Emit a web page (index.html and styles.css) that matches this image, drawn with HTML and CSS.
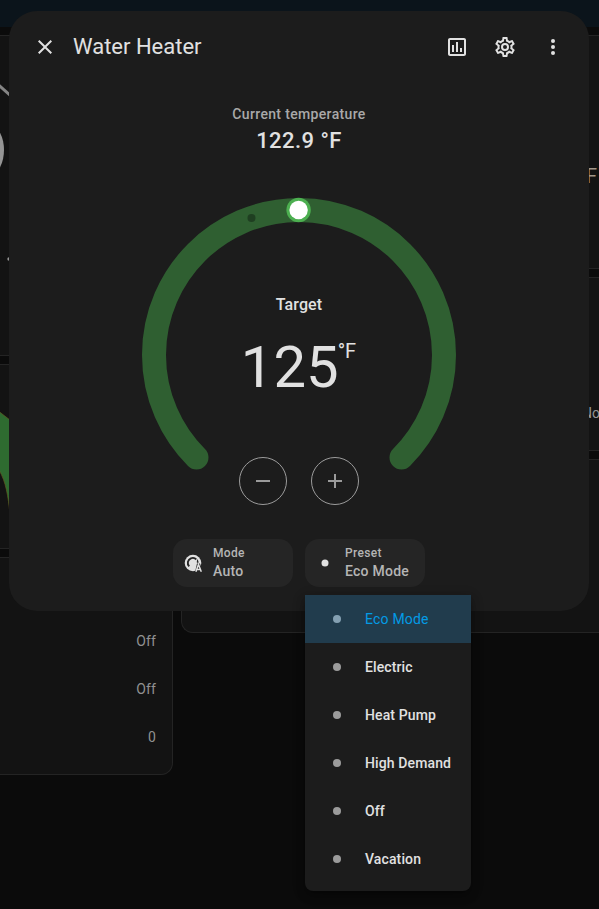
FILE: index.html
```html
<!DOCTYPE html>
<html lang="en">
<head>
<meta charset="utf-8">
<title>Water Heater</title>
<link rel="stylesheet" href="styles.css">
</head>
<body>
<div class="dashboard">
  <header class="app-bar"></header>
  <div class="columns">
    <div class="column column-left">
      <section class="card card-clock">
        <svg class="art" width="12" height="319" viewBox="0 36 12 319">
          <path d="M-2 84.500L12 97" stroke="#858585" stroke-width="3" fill="none"/>
          <ellipse cx="-8" cy="150" rx="12" ry="23" fill="#959595"/>
          <circle cx="9" cy="259" r="1.700" fill="#959595"/>
        </svg>
      </section>
      <section class="card card-gauge">
        <svg class="art" width="12" height="184" viewBox="0 365 12 184">
          <path d="M-1 411.500L10 420V514C8 496 6 482 -1 470Z" fill="#2e6b30" stroke="#6b5a20" stroke-width=".6"/>
        </svg>
      </section>
      <section class="card card-states">
        <div class="state">Off</div>
        <div class="state">Off</div>
        <div class="state">0</div>
      </section>
    </div>
    <div class="column column-right">
      <section class="card card-temp"><span class="unit-text">F</span></section>
      <section class="card card-note"><span class="note-text">No</span></section>
      <section class="card card-last"></section>
    </div>
  </div>
</div>

<main class="dialog">
  <header class="dialog-header">
    <svg class="icon" viewBox="0 0 24 24"><path d="M19,6.410L17.590,5L12,10.590L6.410,5L5,6.410L10.590,12L5,17.590L6.410,19L12,13.410L17.590,19L19,17.590L13.410,12L19,6.410Z"/></svg>
    <h1 class="title">Water Heater</h1>
    <div class="actions">
      <svg class="icon" viewBox="0 0 24 24"><path d="M9 17H7V10H9V17M13 17H11V7H13V17M17 17H15V13H17V17M19 19H5V5H19V19.100M19 3H5C3.900 3 3 3.900 3 5V19C3 20.100 3.900 21 5 21H19C20.100 21 21 20.100 21 19V5C21 3.900 20.100 3 19 3Z"/></svg>
      <svg class="icon" viewBox="0 0 24 24"><path d="M12,8A4,4 0 0,1 16,12A4,4 0 0,1 12,16A4,4 0 0,1 8,12A4,4 0 0,1 12,8M12,10A2,2 0 0,0 10,12A2,2 0 0,0 12,14A2,2 0 0,0 14,12A2,2 0 0,0 12,10M10,22C9.750,22 9.540,21.820 9.500,21.580L9.130,18.930C8.500,18.680 7.960,18.340 7.440,17.940L4.950,18.950C4.730,19.030 4.460,18.950 4.340,18.730L2.340,15.270C2.210,15.050 2.270,14.780 2.460,14.630L4.570,12.970L4.500,12L4.570,11L2.460,9.370C2.270,9.220 2.210,8.950 2.340,8.730L4.340,5.270C4.460,5.050 4.730,4.960 4.950,5.050L7.440,6.050C7.960,5.660 8.500,5.320 9.130,5.070L9.500,2.420C9.540,2.180 9.750,2 10,2H14C14.250,2 14.460,2.180 14.500,2.420L14.870,5.070C15.500,5.320 16.040,5.660 16.560,6.050L19.050,5.050C19.270,4.960 19.540,5.050 19.660,5.270L21.660,8.730C21.790,8.950 21.730,9.220 21.540,9.370L19.430,11L19.500,12L19.430,13L21.540,14.630C21.730,14.780 21.790,15.050 21.660,15.270L19.660,18.730C19.540,18.950 19.270,19.040 19.050,18.950L16.560,17.950C16.040,18.340 15.500,18.680 14.870,18.930L14.500,21.580C14.460,21.820 14.250,22 14,22H10M11.250,4L10.880,6.610C9.680,6.860 8.620,7.500 7.850,8.390L5.440,7.350L4.690,8.650L6.800,10.200C6.400,11.370 6.400,12.640 6.800,13.800L4.680,15.360L5.430,16.660L7.860,15.620C8.630,16.500 9.680,17.140 10.870,17.380L11.240,20H12.760L13.130,17.390C14.320,17.140 15.370,16.500 16.140,15.620L18.570,16.660L19.320,15.360L17.200,13.810C17.600,12.640 17.600,11.370 17.200,10.200L19.310,8.650L18.560,7.350L16.150,8.390C15.380,7.500 14.320,6.860 13.120,6.620L12.750,4H11.250Z"/></svg>
      <svg class="icon" viewBox="0 0 24 24"><circle cx="12" cy="6" r="2"/><circle cx="12" cy="12" r="2"/><circle cx="12" cy="18" r="2"/></svg>
    </div>
  </header>

  <div class="current">
    <div class="current-label">Current temperature</div>
    <div class="current-value">122.9 °F</div>
  </div>

  <div class="dial">
    <svg class="ring" viewBox="0 0 320 320">
      <path d="M57.500 262.500A145 145 0 1 1 262.500 262.500" fill="none" stroke="#2f5f31" stroke-width="24" stroke-linecap="round"/>
      <circle cx="112.500" cy="23" r="4" fill="#1f3f21"/>
      <circle cx="159.600" cy="15" r="12.200" fill="#4caf50"/>
      <circle cx="159.600" cy="15" r="9.200" fill="#fff"/>
    </svg>
    <div class="dial-content">
      <div class="target-label">Target</div>
      <div class="target"><span class="target-value">125</span><span class="target-unit">°F</span></div>
      <div class="steps">
        <button class="step" aria-label="Decrease"><svg class="icon" viewBox="0 0 24 24"><path d="M19,13H5V11H19V13Z"/></svg></button>
        <button class="step" aria-label="Increase"><svg class="icon" viewBox="0 0 24 24"><path d="M19,13H13V19H11V13H5V11H11V5H13V11H19V13Z"/></svg></button>
      </div>
    </div>
  </div>

  <div class="selects">
    <div class="select">
      <svg class="select-icon" viewBox="0 0 20 20">
        <circle cx="10" cy="10" r="8.300" fill="#e1e1e1"/>
        <path d="M6.200 13.400A5 5 0 1 1 14.800 9.800" fill="none" stroke="#252525" stroke-width="1.900"/>
        <path d="M8.200 11.200L14.600 5.200L12.500 13Z" fill="#e1e1e1"/>
        <path d="M11.800 20L14 10.500H17L20 20Z" fill="#252525"/>
        <path d="M12.900 18.700L15.500 11.500L18.300 18.700M13.800 16.500H17.300" fill="none" stroke="#e1e1e1" stroke-width="1.500"/>
      </svg>
      <div class="select-text"><span class="select-label">Mode</span><span class="select-value">Auto</span></div>
    </div>
    <div class="select">
      <svg class="select-icon" viewBox="0 0 20 20"><circle cx="10" cy="10" r="3.500" fill="#e1e1e1"/></svg>
      <div class="select-text"><span class="select-label">Preset</span><span class="select-value">Eco Mode</span></div>
    </div>
  </div>
</main>

<ul class="menu">
  <li class="option selected"><i class="dot"></i>Eco Mode</li>
  <li class="option"><i class="dot"></i>Electric</li>
  <li class="option"><i class="dot"></i>Heat Pump</li>
  <li class="option"><i class="dot"></i>High Demand</li>
  <li class="option"><i class="dot"></i>Off</li>
  <li class="option"><i class="dot"></i>Vacation</li>
</ul>
</body>
</html>
```
FILE: styles.css
```css
* { box-sizing: border-box; }
body {
  margin: 0;
  height: 909px;
  position: relative;
  overflow: hidden;
  background: #0b0b0b;
  color: #e1e1e1;
  font-family: Roboto, "Liberation Sans", sans-serif;
}

.app-bar { height: 27px; background: #0b141b; }
.columns { display: flex; gap: 8px; padding-top: 8px; }
.column { display: flex; flex-direction: column; gap: 8px; }
.column-left { width: 173px; flex: none; }
.column-right { flex: 1; min-width: 0; }
.card {
  background: #131313;
  border: 1px solid #242424;
  border-radius: 12px;
  overflow: hidden;
}
.column-left .card { border-left: 0; border-radius: 0 12px 12px 0; }
.column-right .card { border-right: 0; border-radius: 12px 0 0 12px; }
.art { display: block; }
.card-clock { height: 321px; }
.card-gauge { height: 185px; }
.card-states { height: 218px; padding: 59px 16px 0 0; }
.state {
  height: 48px;
  line-height: 48px;
  text-align: right;
  font-size: 14px;
  letter-spacing: .1px;
  color: #919191;
}
.card-temp { height: 234px; padding: 128px 0 0 404px; }
.unit-text { font-size: 20px; line-height: 24px; color: #a0978a; }
.card-note { height: 174px; padding: 125px 0 0 400px; }
.note-text { font-size: 14px; line-height: 18px; color: #969696; white-space: nowrap; }
.card-last { height: 174px; }

.dialog {
  position: absolute;
  left: 9px;
  top: 11px;
  width: 580px;
  height: 600px;
  border-radius: 28px;
  background: #1c1c1c;
  display: flex;
  flex-direction: column;
  align-items: center;
}
.dialog-header {
  width: 100%;
  height: 72px;
  padding: 0 24px;
  display: flex;
  align-items: center;
}
.icon { width: 24px; height: 24px; fill: currentColor; flex: none; display: block; }
.title { margin: 0 0 0 16px; font-size: 22px; line-height: 28px; font-weight: 400; }
.actions { margin-left: auto; display: flex; gap: 24px; }

.current { text-align: center; margin-top: 20px; }
.current-label {
  font-size: 14px;
  line-height: 22px;
  font-weight: 500;
  letter-spacing: .34px;
  color: #a9a9a9;
}
.current-value { font-size: 22px; line-height: 32px; height: 30px; font-weight: 500; letter-spacing: .45px; }

.dial { display: grid; width: 320px; height: 320px; margin-top: 40px; }
.ring, .dial-content { grid-area: 1 / 1; }
.ring { width: 320px; height: 320px; overflow: visible; }
.dial-content { display: flex; flex-direction: column; align-items: center; padding-top: 98px; }
.target-label { font-size: 16px; line-height: 24px; font-weight: 500; letter-spacing: .1px; }
.target { display: flex; align-items: flex-start; height: 68px; margin-top: 16px; }
.target-value { font-size: 58px; line-height: 68px; margin-right: -1px; }
.target-unit { font-size: 20px; line-height: 24px; margin: 6px 1px 0 0; }
.steps { display: flex; gap: 24px; margin-top: 56px; }
.step {
  width: 48px;
  height: 48px;
  padding: 0;
  border: 1px solid #9b9b9b;
  border-radius: 50%;
  background: none;
  color: #9b9b9b;
  display: grid;
  place-items: center;
}

.selects { display: flex; gap: 12px; margin-top: 24px; }
.select {
  width: 120px;
  height: 48px;
  padding-left: 10px;
  border-radius: 14px;
  background: #252525;
  display: flex;
  align-items: center;
  gap: 10px;
}
.select-icon { width: 20px; height: 20px; }
.select-text { display: flex; flex-direction: column; font-weight: 500; color: #b5b5b5; }
.select-label { font-size: 12px; line-height: 16px; letter-spacing: .35px; }
.select-value { font-size: 14px; line-height: 20px; letter-spacing: .25px; }

.menu {
  position: absolute;
  left: 305px;
  top: 595px;
  width: 166px;
  height: 296px;
  margin: 0;
  padding: 0;
  list-style: none;
  border-radius: 0 0 8px 8px;
  background: #1c1c1c;
  box-shadow: 0 5px 8px rgba(0, 0, 0, .3), 0 3px 14px rgba(0, 0, 0, .2);
}
.option {
  height: 48px;
  padding-left: 28px;
  display: flex;
  align-items: center;
  gap: 24px;
  font-size: 14px;
  font-weight: 500;
  letter-spacing: .12px;
  white-space: nowrap;
}
.dot { width: 8px; height: 8px; border-radius: 50%; background: #9b9b9b; }
.selected { background: #213c4d; color: #039be5; font-weight: 400; letter-spacing: .2px; }
.selected .dot { background: #84a0b2; }
```
